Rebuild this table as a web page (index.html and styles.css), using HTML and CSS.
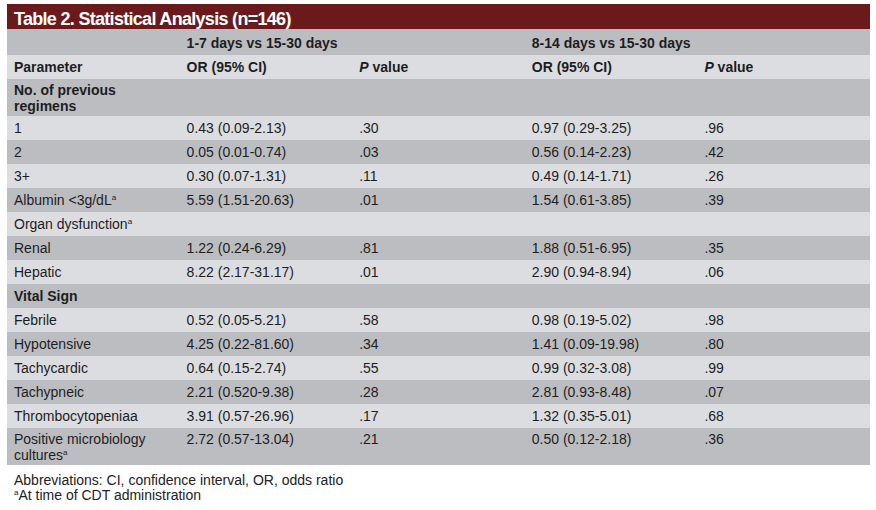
FILE: index.html
```html
<!DOCTYPE html>
<html lang="en">
<head>
<meta charset="utf-8">
<title>Table 2. Statistical Analysis</title>
<link rel="stylesheet" href="styles.css">
</head>
<body>
<div class="figure">
  <div class="title">Table 2. Statistical Analysis (n=146)</div>
  <table class="stats">
    <colgroup>
      <col class="c"><col class="c"><col class="c"><col class="c"><col class="c">
    </colgroup>
    <tr class="dark group">
      <th></th><th colspan="2">1-7 days vs 15-30 days</th><th colspan="2">8-14 days vs 15-30 days</th>
    </tr>
    <tr class="light">
      <th>Parameter</th><th>OR (95% CI)</th><th><i>P</i> value</th><th>OR (95% CI)</th><th><i>P</i> value</th>
    </tr>
    <tr class="dark tall">
      <th class="param"><span class="line">No. of previous</span><span class="line">regimens</span></th><td></td><td></td><td></td><td></td>
    </tr>
    <tr class="light"><td>1</td><td>0.43 (0.09-2.13)</td><td>.30</td><td>0.97 (0.29-3.25)</td><td>.96</td></tr>
    <tr class="dark"><td>2</td><td>0.05 (0.01-0.74)</td><td>.03</td><td>0.56 (0.14-2.23)</td><td>.42</td></tr>
    <tr class="light"><td>3+</td><td>0.30 (0.07-1.31)</td><td>.11</td><td>0.49 (0.14-1.71)</td><td>.26</td></tr>
    <tr class="dark"><td>Albumin &lt;3g/dL<sup class="sup">a</sup></td><td>5.59 (1.51-20.63)</td><td>.01</td><td>1.54 (0.61-3.85)</td><td>.39</td></tr>
    <tr class="light"><td>Organ dysfunction<sup class="sup">a</sup></td><td></td><td></td><td></td><td></td></tr>
    <tr class="dark"><td>Renal</td><td>1.22 (0.24-6.29)</td><td>.81</td><td>1.88 (0.51-6.95)</td><td>.35</td></tr>
    <tr class="light"><td>Hepatic</td><td>8.22 (2.17-31.17)</td><td>.01</td><td>2.90 (0.94-8.94)</td><td>.06</td></tr>
    <tr class="dark"><th>Vital Sign</th><td></td><td></td><td></td><td></td></tr>
    <tr class="light"><td>Febrile</td><td>0.52 (0.05-5.21)</td><td>.58</td><td>0.98 (0.19-5.02)</td><td>.98</td></tr>
    <tr class="dark"><td>Hypotensive</td><td>4.25 (0.22-81.60)</td><td>.34</td><td>1.41 (0.09-19.98)</td><td>.80</td></tr>
    <tr class="light"><td>Tachycardic</td><td>0.64 (0.15-2.74)</td><td>.55</td><td>0.99 (0.32-3.08)</td><td>.99</td></tr>
    <tr class="dark"><td>Tachypneic</td><td>2.21 (0.520-9.38)</td><td>.28</td><td>2.81 (0.93-8.48)</td><td>.07</td></tr>
    <tr class="light"><td>Thrombocytopeniaa</td><td>3.91 (0.57-26.96)</td><td>.17</td><td>1.32 (0.35-5.01)</td><td>.68</td></tr>
    <tr class="dark tall"><td class="param"><span class="line">Positive microbiology</span><span class="line">cultures<sup class="sup">a</sup></span></td><td>2.72 (0.57-13.04)</td><td>.21</td><td>0.50 (0.12-2.18)</td><td>.36</td></tr>
  </table>
  <div class="notes">
    <p>Abbreviations: CI, confidence interval, OR, odds ratio</p>
    <p><sup class="sup">a</sup>At time of CDT administration</p>
  </div>
</div>
</body>
</html>
```
FILE: styles.css
```css
html, body {
  margin: 0;
  padding: 0;
  background: #ffffff;
}

body {
  font-family: "Liberation Sans", Arial, Helvetica, sans-serif;
  color: #1d1d1f;
}

.figure {
  width: 863px;
  padding: 4px 0 0 7px;
}

.title {
  background: #6b1a1c;
  color: #ffffff;
  font-weight: bold;
  font-size: 18px;
  letter-spacing: -0.7px;
  line-height: 20px;
  height: 20px;
  padding: 5px 7px 0 7px;
}

.stats {
  width: 863px;
  border-collapse: collapse;
  border-spacing: 0;
  table-layout: fixed;
  font-size: 14px;
  line-height: 15px;
}

.stats .c {
  width: 20%;
}

.stats th,
.stats td {
  text-align: left;
  vertical-align: top;
  padding: 5px 7px 4px 7px;
  white-space: nowrap;
}

.stats th {
  font-weight: bold;
}

.stats .tall th,
.stats .tall td {
  line-height: 16px;
  padding-top: 3px;
  padding-bottom: 2px;
}

.stats .line {
  display: block;
}

.dark {
  background: #bcbdc0;
}

.light {
  background: #dcdde0;
}

.stats .group th {
  padding-top: 7px;
  padding-bottom: 4px;
}

.sup {
  font-size: 8px;
  line-height: 0;
  vertical-align: 5px;
  font-weight: normal;
}

.notes {
  margin-top: 8px;
  padding-left: 7px;
  font-size: 14px;
  line-height: 15px;
  color: #222222;
}

.notes p {
  margin: 0;
}
```
